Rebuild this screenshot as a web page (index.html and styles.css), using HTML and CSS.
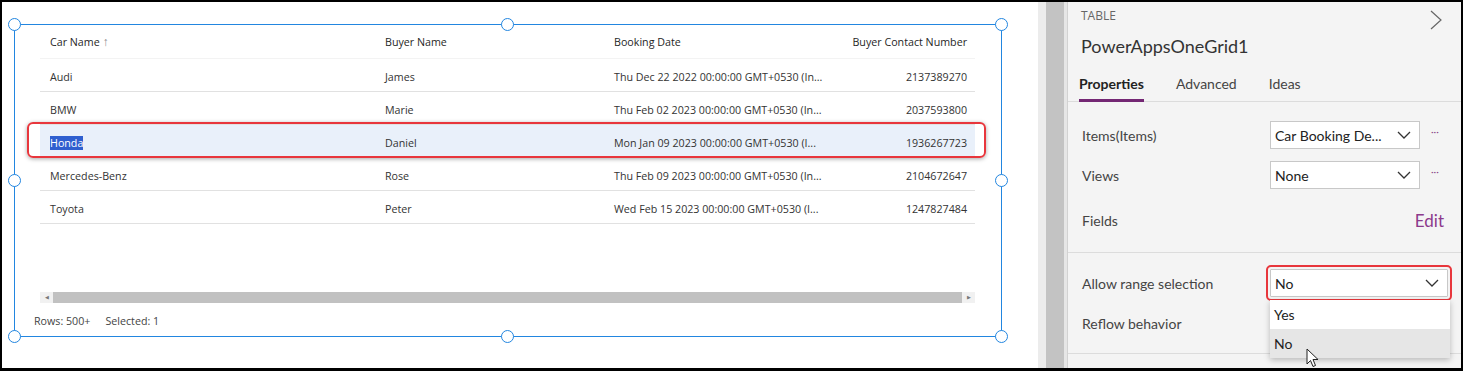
FILE: index.html
```html
<!DOCTYPE html>
<html lang="en">
<head>
  <meta charset="UTF-8" />
  <title>PowerAppsOneGrid1</title>
  <link rel="stylesheet" href="styles.css">
</head>
<body>
  <div class="frame">
    <div class="canvas">
      <div class="grid-box">
        <span class="handle h-tl"></span>
        <span class="handle h-tm"></span>
        <span class="handle h-tr"></span>
        <span class="handle h-ml"></span>
        <span class="handle h-mr"></span>
        <span class="handle h-bl"></span>
        <span class="handle h-bm"></span>
        <span class="handle h-br"></span>

        <div class="grid">
          <div class="row head">
            <div class="cell">Car Name <span class="sort">&#8593;</span></div>
            <div class="cell">Buyer Name</div>
            <div class="cell">Booking Date</div>
            <div class="cell num">Buyer Contact Number</div>
          </div>
          <div class="row">
            <div class="cell">Audi</div>
            <div class="cell">James</div>
            <div class="cell">Thu Dec 22 2022 00:00:00 GMT+0530 (In...</div>
            <div class="cell num">2137389270</div>
          </div>
          <div class="row">
            <div class="cell">BMW</div>
            <div class="cell">Marie</div>
            <div class="cell">Thu Feb 02 2023 00:00:00 GMT+0530 (In...</div>
            <div class="cell num">2037593800</div>
          </div>
          <div class="row selected">
            <div class="cell"><span class="picked">Honda</span></div>
            <div class="cell">Daniel</div>
            <div class="cell">Mon Jan 09 2023 00:00:00 GMT+0530 (I...</div>
            <div class="cell num">1936267723</div>
          </div>
          <div class="row">
            <div class="cell">Mercedes-Benz</div>
            <div class="cell">Rose</div>
            <div class="cell">Thu Feb 09 2023 00:00:00 GMT+0530 (In...</div>
            <div class="cell num">2104672647</div>
          </div>
          <div class="row">
            <div class="cell">Toyota</div>
            <div class="cell">Peter</div>
            <div class="cell">Wed Feb 15 2023 00:00:00 GMT+0530 (I...</div>
            <div class="cell num">1247827484</div>
          </div>
        </div>

        <div class="hscroll">
          <span class="arrow">&#9664;</span>
          <span class="thumb"></span>
          <span class="arrow">&#9654;</span>
        </div>

        <div class="footer">
          <span>Rows: 500+</span>
          <span>Selected: 1</span>
        </div>
      </div>
    </div>

    <div class="gutter">
      <span class="g1"></span>
      <span class="g2"></span>
      <span class="g3"></span>
    </div>

    <div class="panel">
      <div class="panel-head">
        <div class="kind">TABLE</div>
        <div class="name">PowerAppsOneGrid1</div>
        <svg class="close" width="12" height="20" viewBox="0 0 12 20">
          <path d="M1 1 L11 10 L1 19" fill="none" stroke="#666" stroke-width="1.2"/>
        </svg>
      </div>

      <div class="tabs">
        <span class="tab active">Properties</span>
        <span class="tab">Advanced</span>
        <span class="tab">Ideas</span>
      </div>

      <div class="section">
        <div class="prop">
          <span class="label">Items(Items)</span>
          <div class="select">
            <span>Car Booking De...</span>
            <svg width="14" height="8" viewBox="0 0 14 8"><path d="M1 1 L7 7 L13 1" fill="none" stroke="#333" stroke-width="1.3"/></svg>
          </div>
          <span class="more">&middot;&middot;&middot;</span>
        </div>
        <div class="prop">
          <span class="label">Views</span>
          <div class="select">
            <span>None</span>
            <svg width="14" height="8" viewBox="0 0 14 8"><path d="M1 1 L7 7 L13 1" fill="none" stroke="#333" stroke-width="1.3"/></svg>
          </div>
          <span class="more">&middot;&middot;&middot;</span>
        </div>
        <div class="prop fields">
          <span class="label">Fields</span>
          <span class="edit">Edit</span>
        </div>
      </div>

      <div class="section second">
        <div class="prop">
          <span class="label">Allow range selection</span>
          <div class="select wide marked">
            <span>No</span>
            <svg width="14" height="8" viewBox="0 0 14 8"><path d="M1 1 L7 7 L13 1" fill="none" stroke="#333" stroke-width="1.3"/></svg>
            <div class="menu">
              <div class="option">Yes</div>
              <div class="option hover">No</div>
              <svg class="cursor" width="14" height="20" viewBox="0 0 14 20">
                <path d="M1 1 L1 16 L4.5 12.5 L7 18.5 L9.5 17.5 L7 11.5 L12 11.5 Z" fill="#fff" stroke="#222" stroke-width="1"/>
              </svg>
            </div>
          </div>
        </div>
        <div class="prop">
          <span class="label">Reflow behavior</span>
        </div>
      </div>
    </div>
  </div>
</body>
</html>
```

FILE: styles.css
```css
body {
  margin: 0;
  font-family: 'Open Sans', sans-serif;
  background-color: #000;
}
.frame {
  display: flex;
  width: 1463px;
  height: 371px;
  box-sizing: border-box;
  border: 2px solid #000;
  border-bottom-width: 3px;
  background-color: #fff;
  overflow: hidden;
}
.canvas {
  width: 1036px;
  flex-shrink: 0;
  background-color: #fff;
  padding: 22px 0 0 12px;
  box-sizing: border-box;
}
.grid-box {
  position: relative;
  width: 988px;
  height: 313px;
  box-sizing: border-box;
  border: 1px solid #2286e0;
  padding: 0 0 0 25px;
}
.handle {
  position: absolute;
  width: 13px;
  height: 13px;
  box-sizing: border-box;
  border: 1.5px solid #2286e0;
  border-radius: 50%;
  background-color: #fff;
  z-index: 3;
}
.h-tl { left: -7px; top: -7px; }
.h-tm { left: calc(50% - 7px); top: -7px; }
.h-tr { right: -7px; top: -7px; }
.h-ml { left: -7px; top: calc(50% - 7px); }
.h-mr { right: -7px; top: calc(50% - 7px); }
.h-bl { left: -7px; bottom: -7px; }
.h-bm { left: calc(50% - 7px); bottom: -7px; }
.h-br { right: -7px; bottom: -7px; }

.grid {
  width: 935px;
  font-size: 10.7px;
  color: #333;
}
.row {
  display: grid;
  grid-template-columns: 335px 229px 226px 145px;
  height: 33px;
  align-items: center;
  border-bottom: 1px solid #e1e1e1;
  box-sizing: border-box;
}
.row .cell {
  padding-top: 3px;
}
.row.head {
  height: 34px;
  color: #1f1f1f;
  border-bottom-color: #f3f3f3;
}
.row.head .cell {
  padding-top: 0;
}
.cell {
  padding-left: 10px;
  white-space: nowrap;
  overflow: hidden;
}
.cell.num {
  text-align: right;
  padding-right: 8px;
}
.sort {
  color: #888;
  font-size: 12px;
  font-weight: 300;
}
.row.selected {
  position: relative;
  background-color: #e9f0fa;
}
.row.selected::after {
  content: "";
  position: absolute;
  left: -13px;
  right: -11px;
  top: -3px;
  bottom: -1px;
  border: 2px solid #e8363c;
  border-radius: 6px;
  box-shadow: 0 1px 4px rgba(0,0,0,0.35);
}
.picked {
  background-color: #2f5fcf;
  color: #fff;
}

.hscroll {
  display: flex;
  width: 935px;
  height: 11px;
  margin-top: 68px;
  background-color: #f1f1f1;
}
.arrow {
  width: 13px;
  font-size: 5px;
  color: #777;
  text-align: center;
  line-height: 11px;
}
.thumb {
  flex: 1;
  background-color: #c1c1c1;
}
.footer {
  display: flex;
  gap: 15px;
  margin: 11px 0 0 -6px;
  font-size: 10.7px;
  color: #444;
}

.gutter {
  display: flex;
  width: 30px;
  flex-shrink: 0;
}
.g1 { width: 8px; background-color: #ececec; }
.g2 { width: 18px; background-color: #c3c3c3; }
.g3 { width: 3px; background-color: #e6e6e6; border-right: 1px solid #d2d2d2; }

.panel {
  flex: 1;
  background-color: #f4f4f4;
  color: #333;
  font-family: Lato, 'Open Sans', sans-serif;
}
.panel-head {
  position: relative;
  padding: 5px 0 0 13px;
}
.kind {
  font-family: 'Open Sans', sans-serif;
  font-size: 12px;
  color: #666;
  line-height: 17px;
}
.name {
  font-size: 18px;
  line-height: 24px;
  margin-top: 10px;
  color: #333;
}
.close {
  position: absolute;
  right: 19px;
  top: 8px;
}
.tabs {
  display: flex;
  gap: 32px;
  margin-top: 17px;
  padding-left: 11px;
  border-bottom: 1px solid #dcdcdc;
  font-size: 14px;
}
.tab {
  padding-bottom: 7px;
  color: #444;
  border-bottom: 3px solid transparent;
  margin-bottom: -1px;
}
.tab.active {
  font-weight: bold;
  color: #222;
  border-bottom-color: #742774;
}
.section {
  padding: 19px 0 20px 14px;
  border-bottom: 1px solid #dcdcdc;
}
.section.second {
  padding-top: 16px;
  padding-bottom: 16px;
}
.prop {
  display: flex;
  align-items: center;
  height: 28px;
  margin-bottom: 12px;
  font-size: 14px;
}
.prop:last-child {
  margin-bottom: 0;
}
.prop.fields {
  margin-top: 19px;
  height: 24px;
}
.label {
  width: 188px;
  color: #444;
}
.select {
  position: relative;
  display: flex;
  align-items: center;
  justify-content: space-between;
  width: 150px;
  height: 28px;
  box-sizing: border-box;
  padding: 0 8px 0 4px;
  background-color: #fff;
  border: 1px solid #c8c8c8;
  color: #222;
}
.select.wide {
  width: 178px;
}
.select.marked {
  outline: 2px solid #e8363c;
  outline-offset: 2px;
  border-radius: 1px;
}
.more {
  margin-left: 11px;
  color: #8b4a8b;
  font-size: 10px;
  align-self: flex-start;
  margin-top: 4px;
}
.edit {
  margin-left: auto;
  margin-right: 17px;
  color: #8c3a8c;
  font-size: 17px;
}
.menu {
  position: absolute;
  left: -1px;
  top: 30px;
  width: 180px;
  background-color: #fff;
  box-shadow: 0 2px 6px rgba(0,0,0,0.25);
  z-index: 2;
}
.option {
  height: 29px;
  line-height: 29px;
  padding-left: 4px;
}
.option.hover {
  background-color: #e6e6e6;
}
.cursor {
  position: absolute;
  left: 36px;
  top: 48px;
}
```
